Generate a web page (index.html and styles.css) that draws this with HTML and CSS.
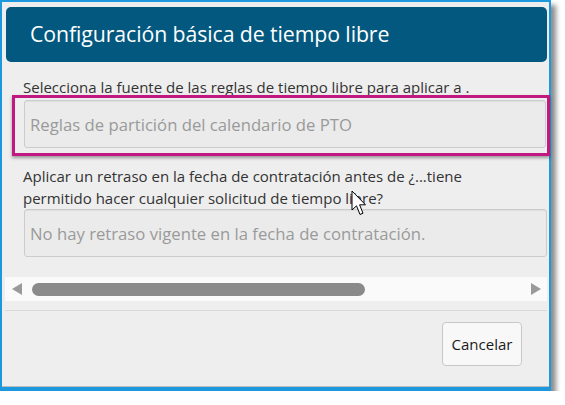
FILE: index.html
```html
<!DOCTYPE html>
<html lang="es">
<head>
<meta charset="utf-8">
<title>Configuración básica de tiempo libre</title>
<link rel="stylesheet" href="styles.css">
</head>
<body>
<div class="frame">
  <div class="header"><h1 class="title">Configuración básica de tiempo libre</h1></div>
  <div class="content">
    <p class="label label-first">Selecciona la fuente de las reglas de tiempo libre para aplicar a .</p>
    <div class="highlight">
      <div class="field">Reglas de partición del calendario de PTO</div>
    </div>
    <p class="label label-second">Aplicar un retraso en la fecha de contratación antes de ¿...tiene permitido hacer cualquier solicitud de tiempo libre?</p>
    <div class="field">No hay retraso vigente en la fecha de contratación.</div>
    <div class="hscroll">
      <span class="arrow arrow-left"></span>
      <span class="track"><span class="thumb"></span></span>
      <span class="arrow arrow-right"></span>
    </div>
  </div>
  <div class="footer">
    <button class="btn" type="button">Cancelar</button>
  </div>
  <svg class="cursor" width="17" height="27" viewBox="0 0 17 27" aria-hidden="true">
    <path d="M1 1 L1 20 L5.5 15.8 L9 24.5 L12 23.2 L8.6 14.8 L14.5 14.8 Z" fill="#fff" stroke="#000" stroke-width="1" stroke-linejoin="miter"/>
  </svg>
</div>
</body>
</html>
```
FILE: styles.css
```css
* { box-sizing: border-box; }
html, body { margin: 0; padding: 0; background: #ffffff; }
body { font-family: "Open Sans", "Noto Sans", "Liberation Sans", sans-serif; }

.frame {
  position: relative;
  width: 551px;
  height: 391px;
  border: 2px solid #1b98de;
  border-bottom-width: 4px;
  background: #eeeeee;
  box-shadow: 5px 5px 5px rgba(0, 0, 0, 0.45), inset 0 -1px 0 #bdbdbd;
  display: flex;
  flex-direction: column;
}

.header {
  margin: 5px 2px 0 4px;
  height: 55px;
  background: #02587f;
  border-radius: 5px;
  display: flex;
  align-items: center;
  padding-left: 24px;
}
.title {
  margin: 0;
  color: #ffffff;
  font-weight: 400;
  font-size: 21.3px;
  letter-spacing: -0.1px;
  line-height: 28px;
  padding-bottom: 1px;
}

.content {
  padding: 0 2px 0 3px;
  display: flex;
  flex-direction: column;
}

.label {
  margin: 0;
  padding-left: 18px;
  color: #333333;
  font-size: 15px;
}
.label-first {
  margin-top: 16px;
  line-height: 18px;
  margin-bottom: -1px;
}
.label-second {
  margin-top: 9px;
  line-height: 22px;
  padding-right: 60px;
}

.highlight {
  margin: 0 -3px 0 7px;
  border: 3px solid #c1197f;
  padding: 2px 1px 5px 9px;
  box-shadow: 0 2px 3px rgba(0, 0, 0, 0.35);
}

.field {
  height: 48px;
  border: 1px solid #cccccc;
  border-radius: 3px;
  background: #ebebeb;
  color: #9a9a9a;
  font-size: 16.7px;
  display: flex;
  align-items: center;
  padding-left: 5px;
  box-shadow: inset 0 1px 1px rgba(0, 0, 0, 0.06);
}
.content > .field { margin-left: 19px; }

.hscroll {
  margin-top: 20px;
  height: 24px;
  background: #fafafa;
  display: flex;
  align-items: center;
  padding: 0 6px 0 7px;
}
.arrow {
  width: 0;
  height: 0;
  border-top: 6.5px solid transparent;
  border-bottom: 6.5px solid transparent;
}
.arrow-left { border-right: 10px solid #9a9a9a; }
.arrow-right { border-left: 10px solid #9a9a9a; }
.track {
  flex: 1;
  display: flex;
  padding: 0 10px;
}
.thumb {
  width: 333px;
  height: 13px;
  border-radius: 7px;
  background: #8a8a8a;
}

.footer {
  flex: 1;
  margin: 9px 2px 0 3px;
  border-top: 1px solid #d9d9d9;
  display: flex;
  justify-content: flex-end;
  align-items: flex-start;
  padding: 11px 25px 0 0;
}
.btn {
  width: 80px;
  height: 44px;
  border: 1px solid #c8c8c8;
  border-radius: 4px;
  background: #f8f8f8;
  color: #1a1a1a;
  font-family: "Open Sans", "Noto Sans", "Liberation Sans", sans-serif;
  font-size: 15px;
  padding: 0;
}

.cursor {
  position: absolute;
  left: 349px;
  top: 188px;
}
```
